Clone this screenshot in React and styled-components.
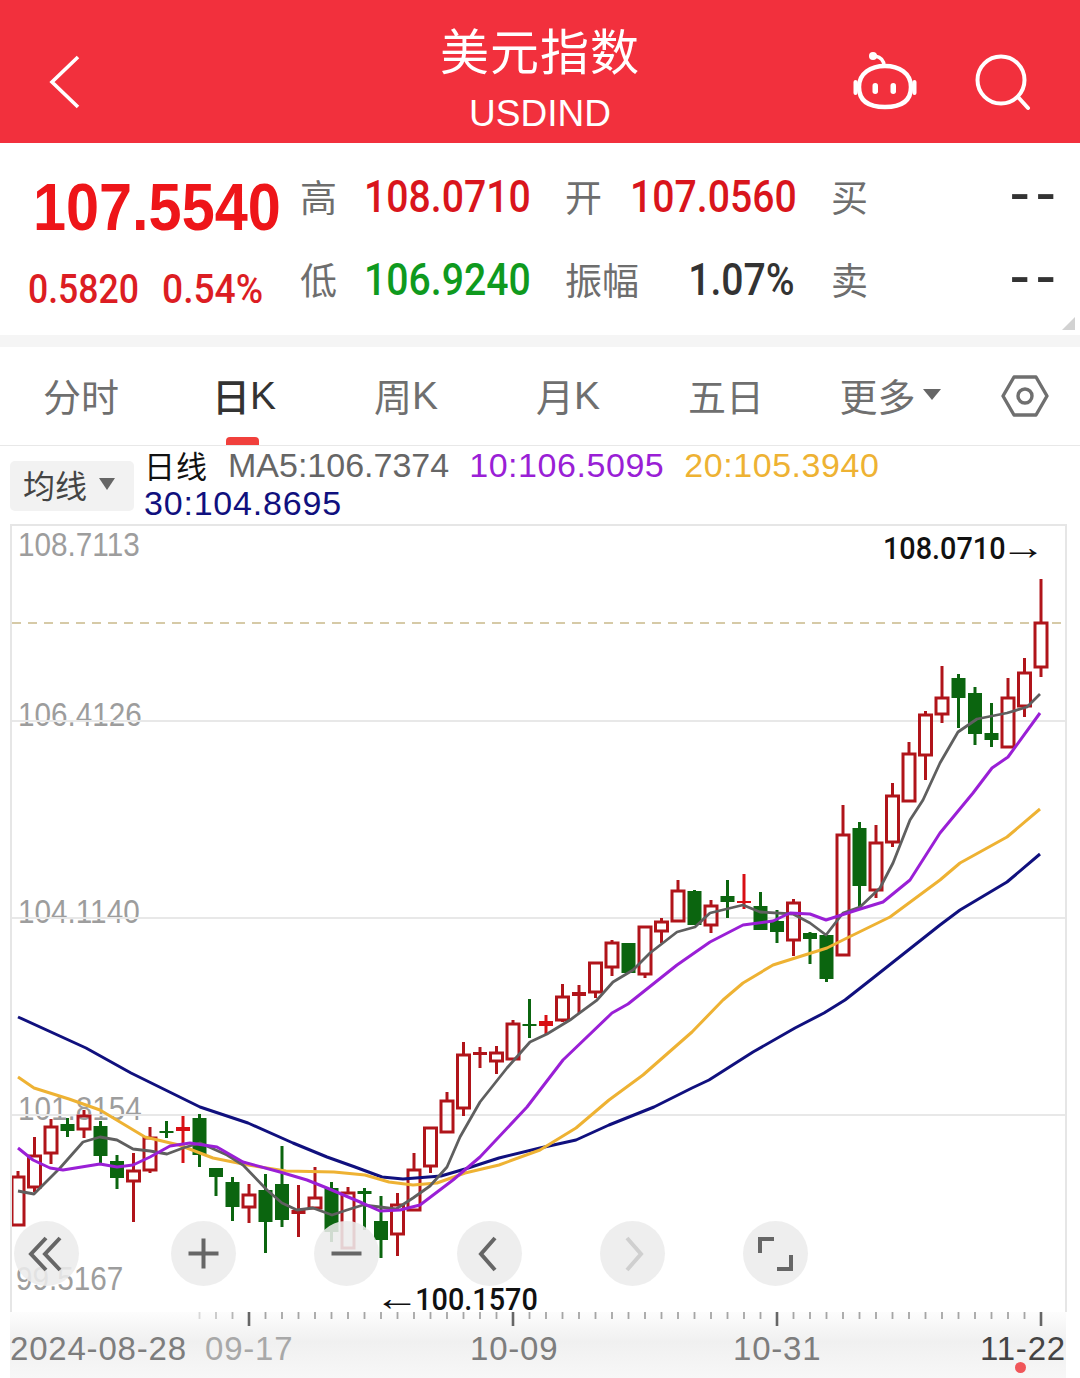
import React from "react";
import styled, { createGlobalStyle } from "styled-components";

const SANS = `"Liberation Sans", "Noto Sans CJK SC", sans-serif`;
const NUM = `Roboto, "Liberation Sans", sans-serif`;
const CJK = `"Noto Sans CJK SC", "Liberation Sans", sans-serif`;

const GlobalStyle = createGlobalStyle`
  html, body { margin: 0; padding: 0; background: #fff; }
  #root { width: 1080px; height: 1378px; overflow: hidden; }
`;

const Page = styled.div`
  width: 1080px;
  font-family: ${CJK};
`;

/* header */
const Header = styled.header`
  height: 143px;
  background: #f2303d;
  display: grid;
  grid-template-columns: 340px 400px 1fr;
  align-items: center;
  color: #fff;
`;
const BackIcon = styled.svg`
  width: 60px;
  height: 70px;
  margin: 26px 0 0 38px;
`;
const TitleBlock = styled.div`
  display: flex;
  flex-direction: column;
  align-items: center;
`;
const Title = styled.div`
  font-size: 49px;
  line-height: 60px;
  margin-top: 19px;
  letter-spacing: 1px;
`;
const Code = styled.div`
  font-family: ${SANS};
  font-size: 37px;
  line-height: 44px;
  margin-top: 13px;
  margin-bottom: 7px;
`;
const HeaderIcons = styled.div`
  display: flex;
  align-items: center;
  gap: 56px;
  padding: 20px 0 0 112px;
`;

/* price block */
const Stats = styled.section`
  position: relative;
  height: 192px;
  display: grid;
  grid-template-columns: 301px 1fr;
`;
const PriceCol = styled.div`
  padding-left: 28px;
`;
const Squeeze = styled.span`
  display: inline-block;
  white-space: nowrap;
  transform: scaleX(${(p) => p.$sx || 0.89});
  transform-origin: ${(p) => (p.$right ? "right" : "left")} center;
`;
const BigPrice = styled.div`
  font-family: ${SANS};
  font-weight: 700;
  font-size: 66px;
  line-height: 70px;
  color: #ee1519;
  margin: 29px 0 0 5px;
`;
const ChangeRow = styled.div`
  display: flex;
  gap: 23px;
  font-family: ${NUM};
  font-weight: 500;
  font-size: 40px;
  line-height: 48px;
  color: #dc1d23;
  margin-top: 24px;
`;
const ChangeValue = styled.div`
  width: ${(p) => p.$w}px;
`;
const StatsGrid = styled.div`
  display: grid;
  grid-template-columns: 63px 202px 64px 202px 60px 1fr;
  grid-auto-rows: 83px;
  align-items: center;
  padding: 12px 18px 0 0;
`;
const Label = styled.div`
  font-size: 37px;
  color: #6e6e6e;
  line-height: 44px;
  white-space: nowrap;
  margin: -2px 0 0 -1px;
`;
const Value = styled.div`
  width: 165px;
  font-family: ${NUM};
  font-weight: 500;
  font-size: 44px;
  line-height: 50px;
  color: ${(p) => p.$color};
  text-align: ${(p) => (p.$right ? "right" : "left")};
`;
const Dash = styled.div`
  font-family: ${SANS};
  font-weight: 700;
  font-size: 40px;
  line-height: 44px;
  letter-spacing: 4px;
  color: #333;
  text-align: right;
  margin-top: -8px;
`;
const Corner = styled.div`
  position: absolute;
  right: 5px;
  bottom: 5px;
  width: 0;
  height: 0;
  border-style: solid;
  border-width: 0 0 13px 13px;
  border-color: transparent transparent #d2d2d2 transparent;
`;
const Gap = styled.div`
  height: 12px;
  background: #f5f5f5;
`;

/* period tabs */
const Tabs = styled.nav`
  height: 98px;
  border-bottom: 1px solid #e8e8e8;
  display: grid;
  grid-template-columns: 162px 164px 160px 164px 152px 176px 94px;
  align-items: center;
`;
const Tab = styled.div`
  position: relative;
  height: 98px;
  box-sizing: border-box;
  padding-bottom: 4px;
  display: flex;
  align-items: center;
  justify-content: center;
  font-size: 38px;
  color: ${(p) => (p.$active ? "#333" : "#6f6f6f")};
  font-weight: ${(p) => (p.$active ? 500 : 400)};
`;
const Latin = styled.span`
  font-family: ${SANS};
  font-size: 39px;
  margin-top: 4px;
`;
const Underline = styled.div`
  position: absolute;
  left: 64px;
  bottom: 0;
  width: 33px;
  height: 8px;
  border-radius: 4px 4px 0 0;
  background: #f1403c;
`;
const DownTriangle = styled.span`
  width: 0;
  height: 0;
  margin-left: ${(p) => p.$ml || 7}px;
  border-style: solid;
  border-width: ${(p) => p.$h || 11}px ${(p) => p.$w || 9}px 0 ${(p) => p.$w || 9}px;
  border-color: #666 transparent transparent transparent;
`;
const HexIcon = styled.svg`
  margin-top: 4px;
`;

/* moving average legend */
const Legend = styled.div`
  height: 78px;
  display: flex;
  align-items: flex-start;
  gap: 10px;
  padding-left: 10px;
`;
const MaSelect = styled.div`
  width: 124px;
  height: 50px;
  margin-top: 15px;
  flex: none;
  background: #f2f2f2;
  border-radius: 5px;
  display: flex;
  align-items: center;
  padding: 0 0 4px 13px;
  box-sizing: border-box;
  font-size: 32px;
  color: #444;
`;
const LegendItems = styled.div`
  display: flex;
  flex-wrap: wrap;
  column-gap: 20px;
  font-family: ${SANS};
  font-size: 34px;
  line-height: 38px;
  width: 900px;
`;
const LegendItem = styled.span`
  color: ${(p) => p.$color};
  letter-spacing: ${(p) => p.$ls ?? 0.55}px;
`;
const LegendTitle = styled.span`
  font-family: ${CJK};
  font-size: 31px;
  letter-spacing: 1px;
  color: #111;
`;

/* chart */
const Chart = styled.div`
  position: relative;
  height: 786px;
  width: 1053px;
  margin-left: 10px;
  border: 2px solid #e6e6e6;
  border-bottom: none;
`;
const ChartSvg = styled.svg`
  position: relative;
  display: block;
  z-index: 1;
`;
const AxisLabel = styled.div`
  position: absolute;
  left: ${(p) => p.$x - 12}px;
  top: ${(p) => p.$y - 526 - 18}px;
  z-index: 0;
  font-family: ${SANS};
  font-size: 33px;
  line-height: 36px;
  color: #9d9d9d;
`;
const Marker = styled(AxisLabel)`
  z-index: 2;
  font-family: ${NUM};
  font-size: 32px;
  font-weight: 500;
  color: #111;
`;
const Arrow = styled.span`
  font-family: "Liberation Sans", sans-serif;
  font-size: 36px;
  font-weight: 400;
  display: inline-block;
  transform: scaleX(1.4);
  margin: ${(p) => (p.$left ? "0 2px 0 0" : "0 0 0 2px")};
`;
const ToolRow = styled.div`
  position: absolute;
  left: 2px;
  top: 695px;
  z-index: 3;
  display: flex;
  gap: 78px;
`;
const ToolButton = styled.div`
  width: 65px;
  height: 65px;
  flex: none;
  margin-right: ${(p) => p.$mr || 0}px;
  border-radius: 50%;
  background: rgba(236, 236, 236, 0.88);
  svg {
    display: block;
  }
`;

/* date axis */
const DateAxis = styled.div`
  height: 66px;
  width: 1056px;
  margin-left: 10px;
  background: linear-gradient(#fdfdfd 0, #f0f0f0 45%, #f7f7f7 100%);
  position: relative;
`;
const TickSvg = styled.svg`
  display: block;
`;
const DateRow = styled.div`
  display: grid;
  grid-template-columns: 195px 265px 263px 247px auto;
  font-family: ${SANS};
  font-size: 33px;
  line-height: 38px;
  letter-spacing: 0.8px;
  margin-top: 4px;
`;
const DateText = styled.div`
  color: ${(p) => p.$color};
  white-space: nowrap;
`;
const TodayDot = styled.div`
  position: absolute;
  left: 1005px;
  top: 50px;
  width: 11px;
  height: 11px;
  border-radius: 50%;
  background: #f0565a;
`;

// [up, bodyTop, bodyBottom, wickTop, wickBottom, solid]
const candles = [
  [1, 1177, 1225, 1171, 1225],
  [1, 1156, 1187, 1137, 1192],
  [1, 1127, 1153, 1119, 1164],
  [0, 1124, 1131, 1118, 1137],
  [1, 1116, 1129, 1110, 1138],
  [0, 1126, 1156, 1121, 1163],
  [0, 1161, 1178, 1155, 1189],
  [1, 1171, 1181, 1153, 1222],
  [1, 1138, 1170, 1127, 1173],
  [0, 1131, 1133, 1121, 1138],
  [1, 1127, 1131, 1116, 1163, 1],
  [0, 1118, 1155, 1114, 1167],
  [0, 1168, 1177, 1168, 1196],
  [0, 1182, 1207, 1177, 1221],
  [1, 1195, 1207, 1184, 1223],
  [0, 1190, 1222, 1174, 1253],
  [0, 1184, 1220, 1146, 1227],
  [1, 1210, 1214, 1185, 1237],
  [1, 1198, 1208, 1167, 1208],
  [0, 1188, 1232, 1182, 1242],
  [1, 1193, 1248, 1187, 1248],
  [0, 1191, 1194, 1188, 1230],
  [0, 1221, 1240, 1196, 1258],
  [1, 1205, 1234, 1193, 1256],
  [1, 1170, 1210, 1153, 1211],
  [1, 1128, 1166, 1128, 1173],
  [1, 1101, 1132, 1092, 1132],
  [1, 1055, 1108, 1042, 1116],
  [1, 1052, 1055, 1047, 1068],
  [1, 1053, 1061, 1046, 1074],
  [1, 1024, 1059, 1020, 1059],
  [0, 1024, 1026, 999, 1038],
  [1, 1021, 1026, 1015, 1035, 1],
  [1, 997, 1020, 984, 1022],
  [1, 992, 996, 985, 1013],
  [1, 963, 992, 963, 998],
  [1, 943, 967, 940, 976],
  [0, 943, 973, 943, 973],
  [1, 927, 974, 927, 978],
  [1, 922, 931, 918, 943],
  [1, 891, 921, 880, 921],
  [0, 891, 925, 890, 925],
  [1, 906, 925, 900, 933],
  [0, 896, 902, 880, 918],
  [1, 901, 903, 874, 909, 1],
  [0, 906, 930, 892, 930],
  [0, 921, 932, 910, 943],
  [1, 903, 940, 899, 956],
  [0, 933, 939, 932, 964],
  [0, 935, 979, 935, 982],
  [1, 835, 955, 805, 955],
  [0, 828, 886, 822, 907],
  [1, 843, 890, 825, 898],
  [1, 796, 842, 783, 847],
  [1, 754, 801, 742, 801],
  [1, 715, 755, 711, 780],
  [1, 698, 714, 666, 723],
  [0, 678, 698, 674, 728],
  [0, 693, 734, 687, 745],
  [0, 733, 740, 703, 747],
  [1, 698, 747, 678, 747],
  [1, 673, 706, 658, 717],
  [1, 623, 667, 579, 677],
];

const ma5 =
  "18,1191 34,1194 60,1168 83,1142 100,1137 117,1140 133,1149 150,1151 167,1154 183,1148 200,1143 227,1155 243,1165 267,1190 282,1203 297,1210 313,1208 332,1215 347,1210 363,1205 380,1207 396,1209 413,1198 430,1186 447,1167 460,1137 480,1102 507,1068 530,1042 547,1034 570,1020 597,1000 613,982 633,970 650,953 677,932 695,927 710,913 743,905 760,912 793,914 810,923 826,935 843,913 860,907 880,888 893,863 910,820 923,800 940,763 958,732 977,719 1007,713 1027,707 1040,694";
const ma10 =
  "18,1148 33,1160 50,1168 63,1170 100,1164 117,1167 133,1165 150,1157 170,1146 190,1143 217,1147 243,1162 280,1172 307,1180 327,1188 360,1202 380,1211 400,1210 420,1205 453,1180 480,1157 527,1107 563,1060 612,1013 628,1004 677,965 710,942 743,925 773,921 790,913 810,914 826,920 857,910 883,902 910,880 940,833 973,793 992,768 1008,757 1040,713";
const ma20 =
  "18,1077 34,1088 69,1099 100,1110 145,1137 179,1145 213,1158 248,1165 286,1171 334,1172 365,1175 389,1182 413,1185 437,1183 465,1173 499,1165 540,1150 576,1128 609,1100 643,1075 692,1032 723,1000 743,983 773,965 827,948 847,938 890,917 940,880 960,863 1007,837 1040,809";
const ma30 =
  "18,1017 86,1048 131,1073 200,1107 248,1123 293,1143 327,1157 355,1167 382,1177 403,1179 441,1176 465,1169 499,1158 540,1148 576,1140 609,1125 654,1107 692,1088 709,1080 753,1052 795,1028 824,1013 845,1000 873,978 940,925 960,910 1007,882 1040,854";

const RED = "#b0141a";
const BRIGHT = "#d80f14";
const GREEN = "#0b650f";

const Candle = ({ i, up, top, bottom, wickTop, wickBottom, solid }) => {
  const x = 18 + i * 16.5;
  const color = up ? RED : GREEN;
  const doji = bottom - top < 6;
  return (
    <g stroke={solid ? BRIGHT : color} strokeWidth="3">
      {wickTop < top && <line x1={x} x2={x} y1={wickTop} y2={top} />}
      {wickBottom > bottom && <line x1={x} x2={x} y1={bottom} y2={wickBottom} />}
      {up && !solid && !doji ? (
        <rect x={x - 6} y={top} width="12" height={bottom - top} fill="none" />
      ) : (
        <rect
          x={x - 7}
          y={top}
          width="14"
          height={bottom - top}
          fill={solid ? BRIGHT : color}
          strokeWidth="0"
        />
      )}
    </g>
  );
};

const ticks = Array.from({ length: 52 }, (_, n) => n + 11);

export default function App() {
  return (
    <Page>
      <GlobalStyle />
      <Header>
        <BackIcon viewBox="0 0 60 70" fill="none" stroke="#fff" strokeWidth="3.6">
          <path d="M40 7 L14 32 L40 57" />
        </BackIcon>
        <TitleBlock>
          <Title>美元指数</Title>
          <Code>USDIND</Code>
        </TitleBlock>
        <HeaderIcons>
          <svg width="66" height="62" viewBox="0 0 66 62" fill="none" stroke="#fff" strokeWidth="4.5">
            <path d="M32 15 C32 9 28 6 23 5" strokeLinecap="round" strokeWidth="3.5" />
            <circle cx="21" cy="5" r="4" fill="#fff" stroke="none" />
            <path d="M7 36 C7 22 19 15 33 15 C47 15 59 22 59 36 C59 50 49 56 33 56 C17 56 7 50 7 36 Z" />
            <path d="M3.5 31 V42 M62.5 31 V42" strokeLinecap="round" strokeWidth="4" />
            <rect x="20.5" y="32" width="5.5" height="11" rx="2.7" fill="#fff" stroke="none" />
            <rect x="38.5" y="32" width="5.5" height="11" rx="2.7" fill="#fff" stroke="none" />
          </svg>
          <svg width="58" height="58" viewBox="0 0 58 58" fill="none" stroke="#fff" strokeWidth="4">
            <circle cx="27" cy="27" r="23.5" />
            <path d="M44 44 L54 55" strokeLinecap="round" />
          </svg>
        </HeaderIcons>
      </Header>

      <Stats>
        <PriceCol>
          <BigPrice>
            <Squeeze $sx={0.9}>107.5540</Squeeze>
          </BigPrice>
          <ChangeRow>
            <ChangeValue $w={111}>
              <Squeeze>0.5820</Squeeze>
            </ChangeValue>
            <ChangeValue $w={100}>
              <Squeeze $sx={0.93}>0.54%</Squeeze>
            </ChangeValue>
          </ChangeRow>
        </PriceCol>
        <StatsGrid>
          <Label>高</Label>
          <Value $color="#d9151c">
            <Squeeze>108.0710</Squeeze>
          </Value>
          <Label>开</Label>
          <Value $color="#d9151c">
            <Squeeze>107.0560</Squeeze>
          </Value>
          <Label>买</Label>
          <Dash>
            <Squeeze $sx={1.5} $right>--</Squeeze>
          </Dash>
          <Label>低</Label>
          <Value $color="#0f9a1e">
            <Squeeze>106.9240</Squeeze>
          </Value>
          <Label>振幅</Label>
          <Value $color="#333" $right>
            <Squeeze $right>1.07%</Squeeze>
          </Value>
          <Label>卖</Label>
          <Dash>
            <Squeeze $sx={1.5} $right>--</Squeeze>
          </Dash>
        </StatsGrid>
        <Corner />
      </Stats>
      <Gap />

      <Tabs>
        <Tab>分时</Tab>
        <Tab $active>
          日<Latin>K</Latin>
          <Underline />
        </Tab>
        <Tab>
          周<Latin>K</Latin>
        </Tab>
        <Tab>
          月<Latin>K</Latin>
        </Tab>
        <Tab>五日</Tab>
        <Tab>
          更多
          <DownTriangle />
        </Tab>
        <Tab>
          <HexIcon width="48" height="44" viewBox="0 0 48 44" fill="none" stroke="#6f6f6f" strokeWidth="3.4">
            <path d="M13 3 H35 L46 22 L35 41 H13 L2 22 Z" strokeLinejoin="round" />
            <circle cx="24" cy="22" r="7" />
          </HexIcon>
        </Tab>
      </Tabs>

      <Legend>
        <MaSelect>
          均线
          <DownTriangle $ml={12} $h={12} $w={8} />
        </MaSelect>
        <LegendItems>
          <LegendTitle>日线</LegendTitle>
          <LegendItem $color="#666" $ls={0}>MA5:106.7374</LegendItem>
          <LegendItem $color="#9a1fd6">10:106.5095</LegendItem>
          <LegendItem $color="#eeb233">20:105.3940</LegendItem>
          <LegendItem $color="#10107e" $ls={0.8}>30:104.8695</LegendItem>
        </LegendItems>
      </Legend>

      <Chart>
        <AxisLabel $x={18} $y={545}><Squeeze $sx={0.9}>108.7113</Squeeze></AxisLabel>
        <AxisLabel $x={18} $y={715}><Squeeze $sx={0.9}>106.4126</Squeeze></AxisLabel>
        <AxisLabel $x={18} $y={912}><Squeeze $sx={0.9}>104.1140</Squeeze></AxisLabel>
        <AxisLabel $x={18} $y={1109}><Squeeze $sx={0.9}>101.8154</Squeeze></AxisLabel>
        <AxisLabel $x={16} $y={1279}><Squeeze $sx={0.9}>99.5167</Squeeze></AxisLabel>

        <ChartSvg width="1053" height="786" viewBox="12 526 1053 786" fill="none">
          {[721, 918, 1115].map((y) => (
            <line key={y} x1="12" x2="1065" y1={y} y2={y} stroke="#e8e8e8" strokeWidth="2" />
          ))}
          <line x1="12" x2="1065" y1="623" y2="623" stroke="#c9b98a" strokeWidth="1.5" strokeDasharray="9 7" />
          {candles.map(([up, top, bottom, wickTop, wickBottom, solid], i) => (
            <Candle
              key={i}
              i={i}
              up={up}
              top={top}
              bottom={bottom}
              wickTop={wickTop}
              wickBottom={wickBottom}
              solid={solid}
            />
          ))}
          <polyline points={ma30} stroke="#10107e" strokeWidth="3" strokeLinejoin="round" />
          <polyline points={ma20} stroke="#eeb233" strokeWidth="3" strokeLinejoin="round" />
          <polyline points={ma5} stroke="#5f5f5f" strokeWidth="2.8" strokeLinejoin="round" />
          <polyline points={ma10} stroke="#9a1fd6" strokeWidth="3" strokeLinejoin="round" />
        </ChartSvg>

        <Marker $x={883} $y={547}>
          <Squeeze $sx={0.9}>
            108.0710
            <Arrow>→</Arrow>
          </Squeeze>
        </Marker>
        <Marker $x={381} $y={1298}>
          <Squeeze $sx={0.9}>
            <Arrow $left>←</Arrow>
            100.1570
          </Squeeze>
        </Marker>

        <ToolRow>
          <ToolButton $mr={14}>
            <svg width="65" height="65" viewBox="0 0 65 65" fill="none" stroke="#666" strokeWidth="4">
              <path d="M32 17 L17 33 L32 49 M46 17 L31 33 L46 49" />
            </svg>
          </ToolButton>
          <ToolButton>
            <svg width="65" height="65" viewBox="0 0 65 65" fill="none" stroke="#666" strokeWidth="4">
              <path d="M17.5 32.5 H47.5 M32.5 17.5 V47.5" />
            </svg>
          </ToolButton>
          <ToolButton>
            <svg width="65" height="65" viewBox="0 0 65 65" fill="none" stroke="#666" strokeWidth="4">
              <path d="M17.5 32.5 H47.5" />
            </svg>
          </ToolButton>
          <ToolButton>
            <svg width="65" height="65" viewBox="0 0 65 65" fill="none" stroke="#666" strokeWidth="4">
              <path d="M38 17 L24 33 L38 49" />
            </svg>
          </ToolButton>
          <ToolButton>
            <svg width="65" height="65" viewBox="0 0 65 65" fill="none" stroke="#cfcfcf" strokeWidth="4">
              <path d="M27 17 L41 33 L27 49" />
            </svg>
          </ToolButton>
          <ToolButton>
            <svg width="65" height="65" viewBox="0 0 65 65" fill="none" stroke="#666" strokeWidth="4">
              <path d="M17 32 V18 H31 M34 48 H48 V34" />
            </svg>
          </ToolButton>
        </ToolRow>
      </Chart>

      <DateAxis>
        <TickSvg width="1056" height="14" viewBox="10 1312 1056 14">
          {ticks.map((n) => {
            const x = 18 + n * 16.5;
            const major = (n - 14) % 16 === 0;
            return (
              <line
                key={n}
                x1={x}
                x2={x}
                y1="1312"
                y2={major ? 1326 : 1319}
                stroke={major ? "#666" : "#a5a5a5"}
                strokeWidth={major ? 2.6 : 1.8}
                opacity={Math.min(1, (n - 9) / 5)}
              />
            );
          })}
        </TickSvg>
        <DateRow>
          <DateText $color="#7d7d7d">2024-08-28</DateText>
          <DateText $color="#a8a8a8">09-17</DateText>
          <DateText $color="#7d7d7d">10-09</DateText>
          <DateText $color="#7d7d7d">10-31</DateText>
          <DateText $color="#444">11-22</DateText>
        </DateRow>
        <TodayDot />
      </DateAxis>
    </Page>
  );
}
